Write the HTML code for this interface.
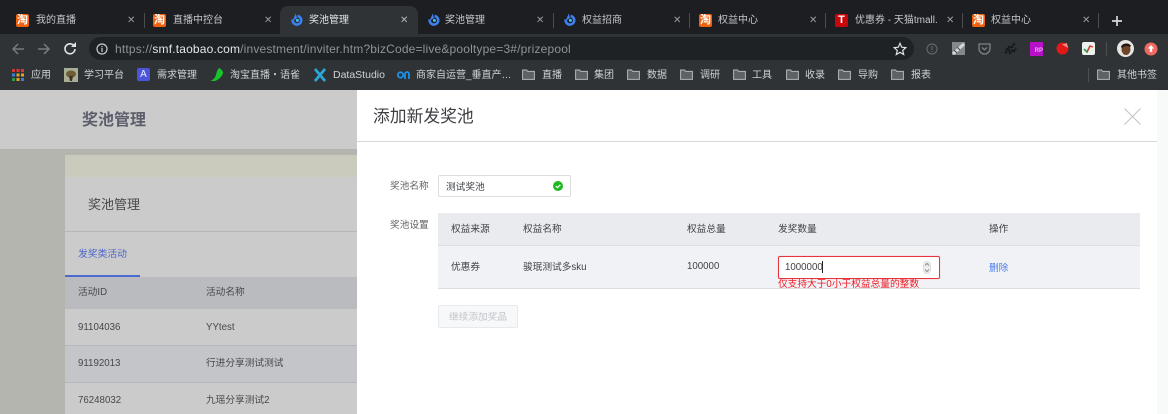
<!DOCTYPE html>
<html lang="zh"><head><meta charset="utf-8"><title>奖池管理</title>
<style>
html,body{margin:0;padding:0;background:#fff}
#r{position:relative;width:1168px;height:414px;overflow:hidden;font-family:"Liberation Sans","Noto Sans CJK SC",sans-serif;background:#fff;filter:blur(.35px)}
.a{position:absolute}
.t{position:absolute;white-space:nowrap;line-height:16px;height:16px}
.tab{color:#c4c7ca;font-size:10px;top:13px}
.x{color:#9a9da0;font-size:10px;top:13px}
.sep{position:absolute;width:1px;background:#4a4d50;top:13px;height:15px}
.bm{color:#d0d3d5;font-size:10px;top:68px}
.ic{position:absolute}
.m{color:#3f4247;font-size:9.7px}
.g{color:#46484c;font-size:9.7px}
.tb{position:absolute;top:14px;width:13px;height:13px;background:#f0610e;border-radius:2px;color:#fff;font-size:11px;font-weight:bold;line-height:13px;text-align:center;overflow:hidden}
</style></head><body><div id="r">
<svg width="0" height="0" style="position:absolute"><defs>
<symbol id="ali" viewBox="0 0 14 14"><path d="M7.600 3a4.300 4.300 0 1 1-4.900 3.500" fill="none" stroke="#3f7ff2" stroke-width="2.600"/><path d="M2.500 8 5.800 .5 7 5Z" fill="#3f7ff2"/><circle cx="7.400" cy="7.400" r="1.500" fill="#35c6f2"/></symbol>
<symbol id="fo" viewBox="0 0 13 11"><path d="M.6 1h4l1 1.400h6.800v8H.6z" fill="#5e6265" stroke="#b5b8ba" stroke-width="1"/></symbol>
</defs></svg>

<div class="a" style="left:0;top:0;width:1168px;height:34px;background:#1d1e21"></div>
<div class="a" style="left:0;top:34px;width:1168px;height:56px;background:#2f3335"></div>
<div class="a" style="left:280px;top:6px;width:138px;height:28px;background:#2f3335;border-radius:8px 8px 0 0"></div>

<!-- tabs -->
<div class="tb" style="left:16px">淘</div>
<span class="t tab" style="left:36px">我的直播</span><span class="t x" style="left:127px">✕</span><div class="sep" style="left:144px"></div>
<div class="tb" style="left:153px">淘</div>
<span class="t tab" style="left:173px">直播中控台</span><span class="t x" style="left:264px">✕</span>
<svg class="ic" style="left:290px;top:13px" width="14" height="14"><use href="#ali"/></svg>
<span class="t tab" style="left:309px;color:#e2e4e6">奖池管理</span><span class="t x" style="left:400px;color:#b5b8ba">✕</span>
<svg class="ic" style="left:427px;top:13px" width="14" height="14"><use href="#ali"/></svg>
<span class="t tab" style="left:445px">奖池管理</span><span class="t x" style="left:536px">✕</span><div class="sep" style="left:553px"></div>
<svg class="ic" style="left:563px;top:13px" width="14" height="14"><use href="#ali"/></svg>
<span class="t tab" style="left:582px">权益招商</span><span class="t x" style="left:673px">✕</span><div class="sep" style="left:689px"></div>
<div class="tb" style="left:699px">淘</div>
<span class="t tab" style="left:718px">权益中心</span><span class="t x" style="left:809px">✕</span><div class="sep" style="left:825px"></div>
<div class="a" style="left:835px;top:14px;width:13px;height:13px;background:#c8070d;border-radius:2px;color:#fff;font-size:11px;font-weight:bold;line-height:13px;text-align:center">T</div>
<span class="t tab" style="left:855px;width:86px;overflow:hidden">优惠券 - 天猫tmall.</span><span class="t x" style="left:946px">✕</span><div class="sep" style="left:962px"></div>
<div class="tb" style="left:972px">淘</div>
<span class="t tab" style="left:991px">权益中心</span><span class="t x" style="left:1082px">✕</span><div class="sep" style="left:1098px"></div>
<svg class="ic" style="left:1111px;top:15px" width="12" height="12"><path d="M6 1v10M1 6h10" stroke="#d5d7d9" stroke-width="1.700"/></svg>

<!-- toolbar -->
<svg class="ic" style="left:10px;top:42px" width="16" height="14"><path d="M14 7H3M8 2 3 7l5 5" fill="none" stroke="#777b7e" stroke-width="1.500"/></svg>
<svg class="ic" style="left:36px;top:42px" width="16" height="14"><path d="M2 7h11M8 2l5 5-5 5" fill="none" stroke="#777b7e" stroke-width="1.500"/></svg>
<svg class="ic" style="left:63px;top:42px" width="14" height="14"><path d="M11.400 4.400A5 5 0 1 0 12 7" fill="none" stroke="#e2e4e5" stroke-width="1.600"/><path d="M8 5h5V0z" fill="#e2e4e5"/></svg>
<div class="a" style="left:89px;top:37px;width:825px;height:23px;border-radius:12px;background:#1f2224"></div>
<svg class="ic" style="left:96px;top:43px" width="12" height="12"><circle cx="6" cy="6" r="5" fill="none" stroke="#c8cacc" stroke-width="1.200"/><path d="M6 5v4M6 3v1.200" stroke="#c8cacc" stroke-width="1.200"/></svg>
<span class="t" style="left:115px;top:41px;font-size:12px;color:#8f9396;letter-spacing:.17px">https://<span style="color:#e4e6e8">smf.taobao.com</span>/investment/inviter.htm?bizCode=live&amp;pooltype=3#/prizepool</span>
<svg class="ic" style="left:893px;top:42px" width="14" height="14"><path d="M7 1.300 8.700 5.200l4.200.4-3.200 2.800 1 4.100L7 10.300l-3.700 2.200 1-4.100L1.100 5.600l4.200-.4z" fill="none" stroke="#dfe1e3" stroke-width="1.200"/></svg>

<svg class="ic" style="left:926px;top:43px" width="12" height="12"><circle cx="6" cy="6" r="5" fill="none" stroke="#606366" stroke-width="1.200"/><path d="M6 3v4M6 8v1.200" stroke="#606366" stroke-width="1.200"/></svg>
<svg class="ic" style="left:952px;top:42px" width="13" height="13"><rect width="13" height="13" fill="#85888a"/><path d="M1 12 12 2" stroke="#d5d7d8" stroke-width="3"/><path d="M2 8l3 3M5 5l3 3" stroke="#44474a"/></svg>
<svg class="ic" style="left:978px;top:43px" width="13" height="12"><path d="M1 1h11v4.500a5.500 5.500 0 0 1-11 0z" fill="none" stroke="#7f8285" stroke-width="1.300"/><path d="M4 4.500l2.500 2.300L9 4.500" fill="none" stroke="#7f8285" stroke-width="1.300"/></svg>
<svg class="ic" style="left:1004px;top:42px" width="13" height="13"><path d="M1 11 5 8l1 3 3-3 1 1 2-3M2 8l3-3 2 1 4-5" fill="none" stroke="#16181a" stroke-width="2.200" stroke-dasharray="2.500 .8"/></svg>
<div class="a" style="left:1030px;top:42px;width:13px;height:14px;background:#b80fc8;color:#e8b0f0;font-size:6px;line-height:19px;font-weight:bold;text-align:right">RP</div>
<svg class="ic" style="left:1056px;top:42px" width="13" height="13"><circle cx="6.500" cy="6.500" r="6" fill="#e01818"/><path d="M6 2.500 11 1l1 5z" fill="#ef8a8a"/></svg>
<svg class="ic" style="left:1082px;top:42px" width="13" height="13"><rect width="13" height="13" rx="2" fill="#eef0ee"/><path d="M2 7l3 3 3-6" fill="none" stroke="#1ca34a" stroke-width="1.600"/><path d="M5 10l3-6 3 1" fill="none" stroke="#e03a2c" stroke-width="1.400"/></svg>
<div class="a" style="left:1106px;top:42px;width:1px;height:14px;background:#4c5053"></div>
<svg class="ic" style="left:1117px;top:40px" width="17" height="17"><circle cx="8.500" cy="8.500" r="8.500" fill="#e8e6e2"/><ellipse cx="9" cy="9.500" rx="4.500" ry="5.500" fill="#6e4427"/><path d="M4 7c1-4 8-5 10-1l-1 1c-3-2-6-1-8 1z" fill="#1c1512"/></svg>
<svg class="ic" style="left:1144px;top:42px" width="14" height="14"><circle cx="7" cy="7" r="6.500" fill="#ef6a62"/><path d="M7 3 3.800 6.500h2V10h2.400V6.500h2z" fill="#fff"/></svg>

<!-- bookmarks -->
<svg class="ic" style="left:12px;top:69px" width="12" height="12"><g><rect x="0" y="0" width="3" height="3" fill="#d33"/><rect x="4.500" y="0" width="3" height="3" fill="#d33"/><rect x="9" y="0" width="3" height="3" fill="#d33"/><rect x="0" y="4.500" width="3" height="3" fill="#3a7fe0"/><rect x="4.500" y="4.500" width="3" height="3" fill="#e8a020"/><rect x="9" y="4.500" width="3" height="3" fill="#e8a020"/><rect x="0" y="9" width="3" height="3" fill="#2a9a48"/><rect x="4.500" y="9" width="3" height="3" fill="#e8a020"/><rect x="9" y="9" width="3" height="3" fill="#3a7fe0"/></g></svg>
<span class="t bm" style="left:31px">应用</span>
<svg class="ic" style="left:64px;top:68px" width="14" height="14"><rect width="14" height="14" fill="#a8ad96"/><ellipse cx="7" cy="6" rx="5" ry="3.500" fill="#6f5c34"/><path d="M5 8h4l-1 5H6z" fill="#40301c"/></svg>
<span class="t bm" style="left:84px">学习平台</span>
<div class="a" style="left:137px;top:68px;width:13px;height:13px;background:#4a55d8;border-radius:2px;color:#eceefc;font-size:10px;line-height:13px;text-align:center">A</div>
<span class="t bm" style="left:157px">需求管理</span>
<svg class="ic" style="left:210px;top:68px" width="13" height="13"><path d="M0 13c3-1 5-3 6-6 .5-3 2-6 3-7 2 1 4 3 4 5-1 4-5 7-8 8z" fill="#17c42c"/></svg>
<span class="t bm" style="left:230px">淘宝直播・语雀</span>
<svg class="ic" style="left:313px;top:68px" width="14" height="14"><path d="M2 1l10 12M12 1 2 13" stroke="#2aa8d8" stroke-width="2.800"/></svg>
<span class="t bm" style="left:333px;top:67px;font-size:10.500px">DataStudio</span>
<svg class="ic" style="left:397px;top:70px" width="14" height="10"><circle cx="3.500" cy="5" r="2.700" fill="none" stroke="#1d8fe8" stroke-width="1.800"/><path d="M8 9V4a2 2 0 0 1 4 0v5" fill="none" stroke="#1d8fe8" stroke-width="1.800"/></svg>
<span class="t bm" style="left:416px">商家自运营_垂直产…</span>
<svg class="ic" style="left:522px;top:69px" width="13" height="11"><use href="#fo"/></svg><span class="t bm" style="left:542px">直播</span>
<svg class="ic" style="left:575px;top:69px" width="13" height="11"><use href="#fo"/></svg><span class="t bm" style="left:594px">集团</span>
<svg class="ic" style="left:627px;top:69px" width="13" height="11"><use href="#fo"/></svg><span class="t bm" style="left:647px">数据</span>
<svg class="ic" style="left:680px;top:69px" width="13" height="11"><use href="#fo"/></svg><span class="t bm" style="left:700px">调研</span>
<svg class="ic" style="left:733px;top:69px" width="13" height="11"><use href="#fo"/></svg><span class="t bm" style="left:752px">工具</span>
<svg class="ic" style="left:786px;top:69px" width="13" height="11"><use href="#fo"/></svg><span class="t bm" style="left:805px">收录</span>
<svg class="ic" style="left:838px;top:69px" width="13" height="11"><use href="#fo"/></svg><span class="t bm" style="left:858px">导购</span>
<svg class="ic" style="left:891px;top:69px" width="13" height="11"><use href="#fo"/></svg><span class="t bm" style="left:911px">报表</span>
<div class="a" style="left:1088px;top:68px;width:1px;height:14px;background:#4c5053"></div>
<svg class="ic" style="left:1097px;top:69px" width="13" height="11"><use href="#fo"/></svg><span class="t bm" style="left:1117px">其他书签</span>

<!-- background page -->
<div class="a" style="left:0;top:90px;width:357px;height:324px;background:#b4b5ae"></div>
<div class="a" style="left:0;top:90px;width:357px;height:59px;background:#cbcbcb"></div>
<span class="t" style="left:82px;top:112px;height:18px;line-height:18px;font-size:16px;font-weight:bold;color:#5c5f6b">奖池管理</span>
<div class="a" style="left:65px;top:155px;width:292px;height:22px;background:#cbcbbd"></div>
<div class="a" style="left:65px;top:177px;width:292px;height:237px;background:#cbcbcb"></div>
<span class="t" style="left:88px;top:197px;font-size:13px;color:#48494c">奖池管理</span>
<div class="a" style="left:65px;top:231px;width:292px;height:1px;background:#b5b6b8"></div>
<span class="t" style="left:78px;top:247px;font-size:9.800px;color:#4c66c8">发奖类活动</span>
<div class="a" style="left:65px;top:275px;width:75px;height:2px;background:#4c6bd0"></div>
<div class="a" style="left:65px;top:277px;width:292px;height:32px;background:#b9bbbf"></div>
<span class="t g" style="left:78px;top:285px">活动ID</span><span class="t g" style="left:206px;top:285px">活动名称</span>
<span class="t g" style="left:78px;top:320px">91104036</span><span class="t g" style="left:206px;top:320px">YYtest</span>
<div class="a" style="left:65px;top:345px;width:292px;height:37px;background:#c4c5c8;border-top:1px solid #b6b7ba;box-sizing:border-box"></div>
<span class="t g" style="left:78px;top:356px">91192013</span><span class="t g" style="left:206px;top:356px">行进分享测试测试</span>
<div class="a" style="left:65px;top:382px;width:292px;height:1px;background:#b6b7ba"></div>
<span class="t g" style="left:78px;top:393px">76248032</span><span class="t g" style="left:206px;top:393px">九瑶分享测试2</span>

<!-- drawer -->
<div class="a" style="left:357px;top:90px;width:811px;height:324px;background:#fff"></div>
<div class="a" style="left:1157px;top:90px;width:11px;height:324px;background:#f8f9f9"></div>
<span class="t" style="left:373px;top:107px;height:20px;line-height:20px;font-size:16.800px;color:#3c3e42">添加新发奖池</span>
<svg class="ic" style="left:1124px;top:108px" width="17" height="17"><path d="M.5.500l16 16M16.500.500l-16 16" stroke="#c4c5c7" stroke-width="1.100"/></svg>
<div class="a" style="left:357px;top:141px;width:800px;height:1px;background:#d6d7d9"></div>

<span class="t m" style="left:390px;top:179px;color:#606266">奖池名称</span>
<div class="a" style="left:438px;top:175px;width:133px;height:22px;box-sizing:border-box;border:1px solid #dcdee2;border-radius:2px;background:#fff"></div>
<span class="t m" style="left:446px;top:180px">测试奖池</span>
<svg class="ic" style="left:553px;top:181px" width="10" height="10"><circle cx="5" cy="5" r="5" fill="#1cb91f"/><path d="M2.700 5.100l1.700 1.600 3-3" fill="none" stroke="#fff" stroke-width="1.200"/></svg>

<span class="t m" style="left:390px;top:218px;color:#606266">奖池设置</span>
<div class="a" style="left:438px;top:213px;width:702px;height:32px;background:#e9ebef;border-bottom:1px solid #dcdee2"></div>
<div class="a" style="left:438px;top:246px;width:702px;height:42px;background:#f0f2f6;border-bottom:1px solid #dcdee2"></div>
<span class="t m" style="left:451px;top:222px">权益来源</span>
<span class="t m" style="left:523px;top:222px">权益名称</span>
<span class="t m" style="left:687px;top:222px">权益总量</span>
<span class="t m" style="left:778px;top:222px">发奖数量</span>
<span class="t m" style="left:989px;top:222px">操作</span>
<span class="t m" style="left:451px;top:260px">优惠券</span>
<span class="t m" style="left:523px;top:260px">骏珉测试多sku</span>
<span class="t m" style="left:687px;top:259px">100000</span>
<div class="a" style="left:778px;top:256px;width:162px;height:23px;box-sizing:border-box;border:1px solid #e8353b;box-shadow:0 0 1px #f99;border-radius:2px;background:#fff"></div>
<span class="t" style="left:785px;top:260px;font-size:9.700px;color:#3f4247">1000000</span>
<div class="a" style="left:822px;top:261px;width:1px;height:12px;background:#222"></div>
<div class="a" style="left:923px;top:261px;width:8px;height:13px;border-radius:4px;background:#eceded;border:.5px solid #ddd;box-sizing:border-box"></div>
<svg class="ic" style="left:924px;top:262px" width="6" height="11"><path d="M1 3.500 3 1.500l2 2M1 7.500l2 2 2-2" fill="none" stroke="#777" stroke-width=".8"/></svg>
<span class="t" style="left:778px;top:277px;font-size:9.700px;color:#f01c24">仅支持大于0小于权益总量的整数</span>
<span class="t m" style="left:989px;top:261px;color:#4d7df0">删除</span>
<div class="a" style="left:438px;top:305px;width:80px;height:23px;box-sizing:border-box;border:1px solid #e8e9ec;border-radius:2px;background:#f7f8fa"></div>
<span class="t m" style="left:449px;top:310px;color:#c3c5ca">继续添加奖品</span>
</div></body></html>
